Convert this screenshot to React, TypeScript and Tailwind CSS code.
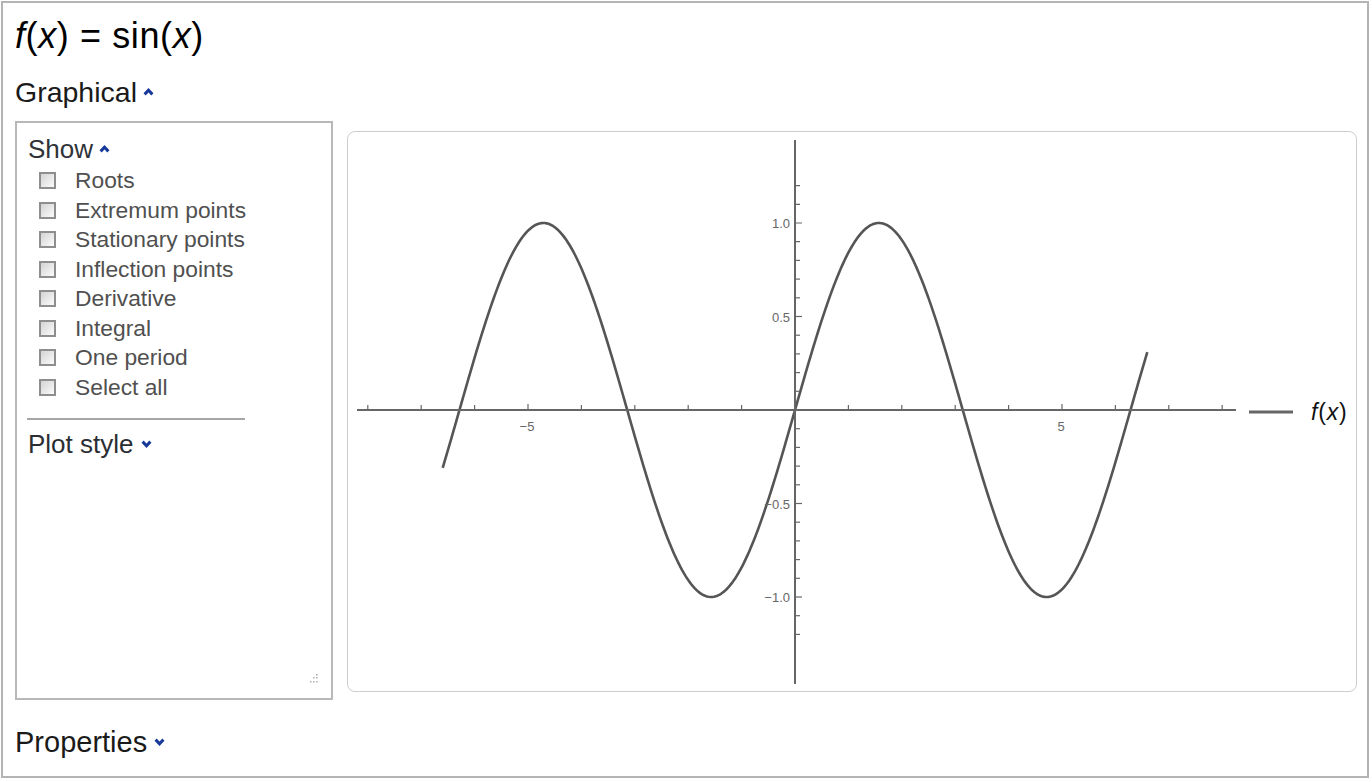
import React from "react";

const FONT = { fontFamily: '"Liberation Sans", Arial, sans-serif' };

function CaretUp() {
  return (
    <svg width="11" height="8" viewBox="0 0 11 8" className="inline-block ml-[6px]">
      <path d="M1.6 6.4 L5.5 2.3 L9.4 6.4" fill="none" stroke="#17399a" strokeWidth="3" />
    </svg>
  );
}
function CaretDown() {
  return (
    <svg width="11" height="8" viewBox="0 0 11 8" className="inline-block ml-[7px]">
      <path d="M1.6 1.6 L5.5 5.7 L9.4 1.6" fill="none" stroke="#17399a" strokeWidth="3" />
    </svg>
  );
}

const items = [
  "Roots",
  "Extremum points",
  "Stationary points",
  "Inflection points",
  "Derivative",
  "Integral",
  "One period",
  "Select all",
];

function Plot() {
  const X0 = 795;
  const Y0 = 410;
  const SX = 53.4;
  const SY = 187;
  const pts: string[] = [];
  const a = -2.1 * Math.PI;
  const b = 2.1 * Math.PI;
  const N = 400;
  for (let i = 0; i <= N; i++) {
    const x = a + ((b - a) * i) / N;
    pts.push(`${(X0 + SX * x).toFixed(2)},${(Y0 - SY * Math.sin(x)).toFixed(2)}`);
  }
  const xt: number[] = [];
  for (let i = -8; i <= 8; i++) if (i !== 0) xt.push(i);
  const yt: number[] = [];
  for (let i = -12; i <= 12; i++) if (i !== 0) yt.push(i);
  return (
    <svg className="block w-full h-full" viewBox="348 132 1008 559" preserveAspectRatio="none">
      <polyline points={pts.join(" ")} fill="none" stroke="#555" strokeWidth="2.6" strokeLinejoin="round" />
      <line x1="357" y1={Y0} x2="1236" y2={Y0} stroke="#666" strokeWidth="2" />
      <line x1={X0} y1="140" x2={X0} y2="684" stroke="#666" strokeWidth="2" />
      {xt.map((i) => (
        <line key={"x" + i} x1={X0 + SX * i} y1={Y0 - (i % 5 === 0 ? 6 : 5)} x2={X0 + SX * i} y2={Y0} stroke="#666" strokeWidth="1.2" />
      ))}
      {yt.map((i) => (
        <line key={"y" + i} x1={X0} y1={Y0 - SY * i * 0.1} x2={X0 + (i % 5 === 0 ? 7 : 5)} y2={Y0 - SY * i * 0.1} stroke="#666" strokeWidth="1.2" />
      ))}
      <g fill="#666" fontSize="13" style={FONT}>
        <text x="790" y={Y0 - SY + 5} textAnchor="end">1.0</text>
        <text x="790" y={Y0 - SY * 0.5 + 5} textAnchor="end">0.5</text>
        <text x="790" y={Y0 + SY * 0.5 + 5} textAnchor="end">−0.5</text>
        <text x="790" y={Y0 + SY + 5} textAnchor="end">−1.0</text>
        <text x={X0 - SX * 5 - 1} y="431" textAnchor="middle">−5</text>
        <text x={X0 + SX * 5 - 1} y="431" textAnchor="middle">5</text>
      </g>
      <line x1="1249" y1="412" x2="1293" y2="412" stroke="#666" strokeWidth="3" />
      <text x="1311" y="420" fontSize="23" fill="#111" style={FONT} letterSpacing="0.8">
        <tspan fontStyle="italic">f</tspan>(<tspan fontStyle="italic">x</tspan>)
      </text>
    </svg>
  );
}

export default function App() {
  return (
    <div className="bg-white w-[1372px] h-[782px] overflow-hidden" style={FONT}>
      <div className="mt-[1px] ml-[1px] w-[1368px] h-[777px] border-2 border-[#b4b4b4] pl-[12px] pt-[13px] text-black">
        <div className="text-[36px] leading-[40px] h-[40px] tracking-[0.6px]">
          <span className="italic">f</span>(<span className="italic">x</span>) = sin(<span className="italic">x</span>)
        </div>
        <div className="mt-[20px] text-[28.5px] leading-[32px] h-[32px] text-[#1a1a1a] flex items-center">
          <span>Graphical</span>
          <CaretUp />
        </div>
        <div className="mt-[13px] flex">
          <div className="relative w-[318px] h-[579px] border-2 border-[#b8b8b8] pl-[11px] pt-[11px]">
            <div className="text-[26px] leading-[30px] h-[30px] text-[#2f3338] flex items-center">
              <span>Show</span>
              <CaretUp />
            </div>
            <div className="mt-[2px] ml-[11px]">
              {items.map((t) => (
                <div key={t} className="flex items-center h-[29.5px]">
                  <div className="w-[17px] h-[17px] border-2 border-[#8e8e8e] bg-gradient-to-br from-[#d4d4d4] to-[#fbfbfb]" />
                  <span className="ml-[19px] text-[22.8px] leading-[29.5px] text-[#505050]">{t}</span>
                </div>
              ))}
            </div>
            <div className="mt-[16px] ml-[-1px] w-[218px] h-[2px] bg-[#a6a6a6]" />
            <div className="mt-[9px] text-[26px] leading-[30px] h-[30px] text-[#2a2e33] flex items-center">
              <span>Plot style</span>
              <CaretDown />
            </div>
            <svg className="absolute right-[13px] bottom-[14px]" width="10" height="10" viewBox="0 0 10 10">
              <g fill="#b0b0b0">
                <rect x="8" y="0" width="1.5" height="1.5" />
                <rect x="5" y="3" width="1.5" height="1.5" />
                <rect x="8" y="3" width="1.5" height="1.5" />
                <rect x="2" y="7" width="1.5" height="1.5" />
                <rect x="5" y="7" width="1.5" height="1.5" />
                <rect x="8" y="7" width="1.5" height="1.5" />
              </g>
            </svg>
          </div>
          <div className="ml-[14px] mt-[10px] w-[1010px] h-[561px] border border-[#cdcdcd] rounded-[8px] overflow-hidden">
            <Plot />
          </div>
        </div>
        <div className="mt-[26px] text-[29px] leading-[32px] h-[32px] text-[#1a1a1a] flex items-center">
          <span>Properties</span>
          <CaretDown />
        </div>
      </div>
    </div>
  );
}
